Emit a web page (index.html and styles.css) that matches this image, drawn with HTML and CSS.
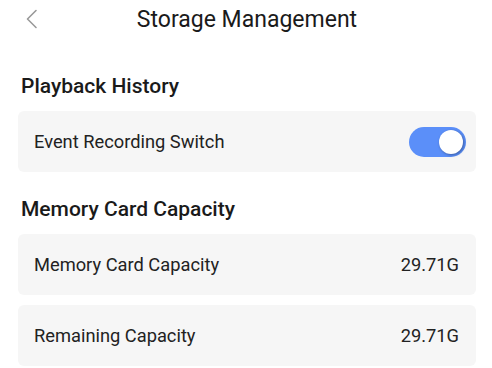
FILE: index.html
```html
<!DOCTYPE html>
<html lang="en">
<head>
  <meta charset="UTF-8">
  <title>Storage Management</title>
  <meta name="viewport" content="width=device-width, initial-scale=1">
  <link rel="stylesheet" href="styles.css">
</head>
<body>
  <header class="nav-bar">
    <button class="back-button" aria-label="Back">
      <svg width="12" height="20" viewBox="0 0 12 20">
        <path d="M10 1.5 L1.5 10 L10 18.5" fill="none" stroke="#9a9a9a" stroke-width="1.6" stroke-linecap="round" stroke-linejoin="round"/>
      </svg>
    </button>
    <div class="nav-title">Storage Management</div>
  </header>

  <section class="group">
    <h2 class="group-title">Playback History</h2>
    <div class="row">
      <span class="row-label">Event Recording Switch</span>
      <label class="switch">
        <input type="checkbox" checked>
        <span class="switch-track"><span class="switch-knob"></span></span>
      </label>
    </div>
  </section>

  <section class="group">
    <h2 class="group-title">Memory Card Capacity</h2>
    <div class="row">
      <span class="row-label">Memory Card Capacity</span>
      <span class="row-value">29.71G</span>
    </div>
    <div class="row">
      <span class="row-label">Remaining Capacity</span>
      <span class="row-value">29.71G</span>
    </div>
  </section>
</body>
</html>
```

FILE: styles.css
```css
:root {
  --blue: #5b8ff9;
  --card: #f6f6f6;
  --text: #222;
  --title: #1a1a1a;
}

body {
  margin: 0;
  padding: 0 16px 0 18px;
  font-family: Roboto, "Noto Sans", sans-serif;
  color: var(--text);
  background: #fff;
  overflow: hidden;
}

.nav-bar {
  position: relative;
  height: 38px;
  display: flex;
  align-items: center;
  justify-content: center;
}

.back-button {
  position: absolute;
  left: 8px;
  top: 9px;
  padding: 0;
  border: none;
  background: none;
  display: flex;
}

.nav-title {
  font-size: 23px;
  line-height: 27px;
  color: var(--title);
}

.group {
  margin-top: 36px;
}

.group + .group {
  margin-top: 25px;
}

.group-title {
  margin: 0 0 12px 3px;
  font-size: 21px;
  line-height: 25px;
  font-weight: 500;
  color: var(--title);
}

.row {
  height: 61px;
  margin-bottom: 10px;
  padding: 0 17px 0 16px;
  display: flex;
  align-items: center;
  justify-content: space-between;
  background: var(--card);
  border-radius: 6px;
  font-size: 18.3px;
}

.row-value { color: var(--text); }

.switch { margin-right: -7px; display: flex; }

.switch input { display: none; }

.switch-track {
  width: 57px;
  height: 30px;
  border-radius: 15px;
  background: var(--blue);
  display: flex;
  align-items: center;
  justify-content: flex-end;
  padding-right: 3px;
  box-sizing: border-box;
}

.switch-knob {
  width: 24px;
  height: 24px;
  border-radius: 50%;
  background: #fff;
  box-shadow: 1px 1px 3px rgba(0, 0, 0, 0.35);
}
```
